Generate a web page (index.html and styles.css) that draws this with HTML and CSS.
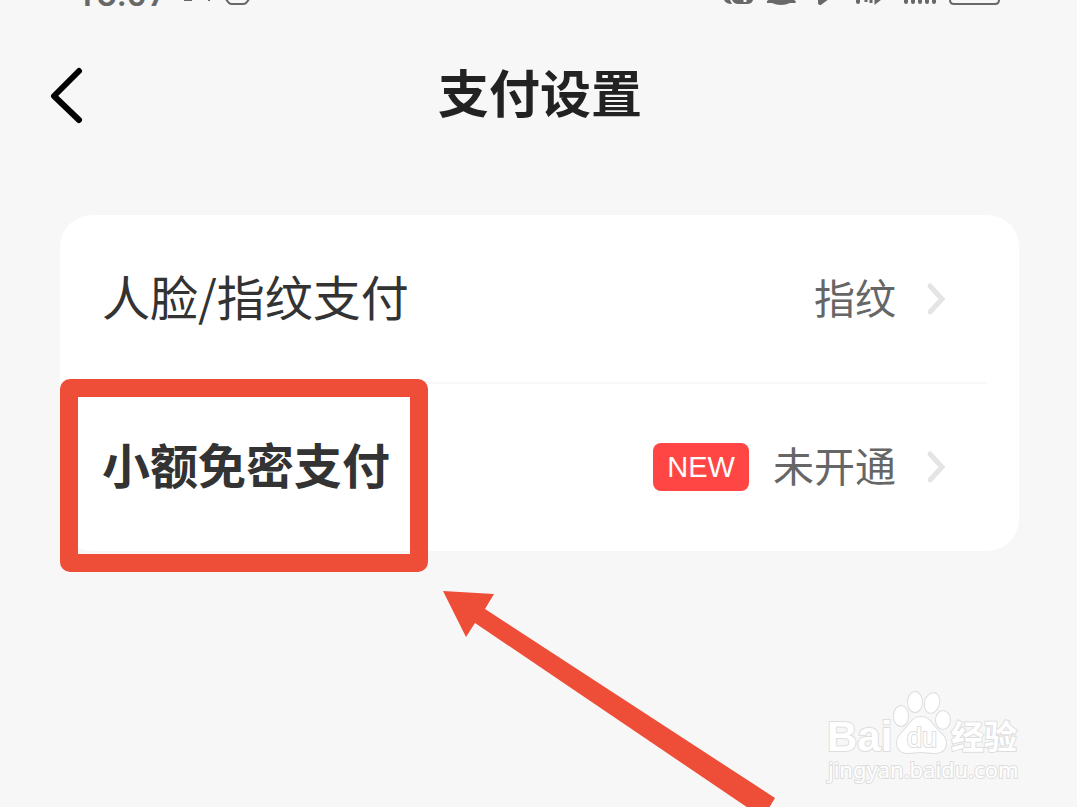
FILE: index.html
```
<!DOCTYPE html>
<html lang="zh-CN">
<head>
    <meta charset="UTF-8">
    <meta name="viewport" content="width=device-width, initial-scale=1.0">
    <title>支付设置</title>
    <link rel="stylesheet" href="styles.css">
</head>
<body>
    <div class="status-bar">
        <div class="status-left">
            <span class="time">18:07</span>
            <svg width="84" height="16" viewBox="0 0 84 16">
                <path d="M9 0h8M34 0v1" stroke="#686868" stroke-width="2"/>
                <path d="M50 -2l4 5q1 1 3 1h11q2 0 3-1l4-5" fill="none" stroke="#686868" stroke-width="2"/>
            </svg>
        </div>
        <svg width="280" height="16" viewBox="0 0 280 16">
            <g fill="#686868">
                <path d="M3 0h6l2 4q-6 0-8-4zM11 0h21q-1 4-6 4H17q-4 0-6-4z"/>
                <path d="M46 1q2-2 6-1h17q5-1 6 2l-1 1h-5q-4 2-9 2t-9-2h-5z"/>
            </g>
            <path d="M24 0v2" stroke="#f7f7f7" stroke-width="3"/>
            <g fill="none" stroke="#686868" stroke-width="4" stroke-linecap="round" stroke-linejoin="round">
                <path d="M99 -2v5l7-5"/>
                <path d="M137 -2v4"/>
                <path d="M185 -2v4M192 -2v4M199 -2v4M206 -2v4M213 -2v4"/>
            </g>
            <path d="M145 -2v4M150 -2v5M155 -2v4l5-4" fill="none" stroke="#686868" stroke-width="3"/>
            <path d="M229 -3v3q0 4 4 4h41q4 0 4-4v-3" fill="none" stroke="#686868" stroke-width="2"/>
        </svg>
    </div>

    <header class="header">
        <button type="button" class="back" aria-label="返回">
            <svg width="36" height="60" viewBox="0 0 36 60">
                <path d="M30 5L5 30l25 24" fill="none" stroke="#000" stroke-width="6" stroke-linecap="round" stroke-linejoin="round"/>
            </svg>
        </button>
        <h1>支付设置</h1>
    </header>

    <main class="card">
        <a class="row" href="#">
            <span class="label">人脸/指纹支付</span>
            <span class="value">指纹</span>
            <svg class="chevron" width="20" height="34" viewBox="0 0 20 34">
                <path d="M4 4l12 13L4 30" />
            </svg>
        </a>
        <hr class="divider">
        <a class="row" href="#">
            <span class="label strong">小额免密支付</span>
            <span class="badge">NEW</span>
            <span class="value">未开通</span>
            <svg class="chevron" width="20" height="34" viewBox="0 0 20 34">
                <path d="M4 4l12 13L4 30" />
            </svg>
        </a>

        <!-- red box and arrow lie over the second row -->
        <div class="mark"></div>
        <svg class="arrow" width="334" height="230" viewBox="0 0 334 230">
            <path d="M0 0L51 3l-9 15L332 207l-12 20L32 32l-9 14z" fill="#ee4e38"/>
        </svg>
    </main>

    <svg class="watermark" width="200" height="100" viewBox="0 0 200 100">
        <g class="wm-text">
            <text class="wm-bai" x="6" y="62">Bai</text>
            <g>
                <ellipse cx="80" cy="27" rx="7" ry="10"/>
                <ellipse cx="94" cy="13" rx="7" ry="10"/>
                <ellipse cx="111" cy="14" rx="7" ry="10" transform="rotate(14 111 14)"/>
                <ellipse cx="122" cy="31" rx="7" ry="9"/>
                <path d="M100 28c7 0 10 5 14 10 5 6 11 9 11 16 0 8-6 10-12 10-5 0-8-1-13-1s-8 1-13 1c-7 0-11-4-11-10 0-7 5-10 10-16 4-5 7-10 14-10z"/>
            </g>
            <text class="wm-du" x="86" y="58">du</text>
            <text class="wm-cn" x="130" y="60">经验</text>
            <text class="wm-url" x="7" y="89">jingyan.baidu.com</text>
        </g>
    </svg>
</body>
</html>
```
FILE: styles.css
```
* {
    box-sizing: border-box;
}

body {
    margin: 0;
    min-height: 100vh;
    position: relative;
    overflow: hidden;
    background-color: #f7f7f7;
    font-family: "Noto Sans CJK SC", sans-serif;
    color: #333;
}

.status-bar {
    display: flex;
    justify-content: space-between;
    height: 16px;
    padding: 0 76px;
    overflow: hidden;
}

.status-left {
    display: flex;
    align-items: flex-end;
    gap: 8px;
}

.time {
    padding-bottom: 4px;
    font-family: Roboto, sans-serif;
    font-size: 36px;
    font-weight: 500;
    line-height: 36px;
    color: #686868;
}

.header {
    display: grid;
    grid-template-columns: 80px 1fr 80px;
    align-items: center;
    height: 159px;
    padding: 0 46px 0 49px;
}

.back {
    display: flex;
    padding: 0;
    border: 0;
    background: none;
    cursor: pointer;
}

h1 {
    margin: 0;
    padding-bottom: 10px;
    text-align: center;
    font-size: 51px;
    line-height: 60px;
    color: #222;
}

.card {
    position: relative;
    margin: 40px 58px 0 60px;
    border-radius: 32px;
    background-color: #fff;
}

.row {
    display: flex;
    align-items: center;
    height: 168px;
    padding: 0 73px 0 42px;
    color: inherit;
    text-decoration: none;
}

.label {
    flex: 1;
    padding-bottom: 8px;
    font-size: 48px;
    line-height: 60px;
}

.strong {
    font-weight: bold;
}

.badge {
    padding: 0 14px;
    margin-right: 24px;
    border-radius: 8px;
    background-color: #ff4645;
    color: #fff;
    font-family: "Liberation Sans", sans-serif;
    font-size: 29px;
    line-height: 48px;
}

.value {
    padding-bottom: 6px;
    margin-right: 30px;
    font-size: 41px;
    line-height: 60px;
    color: #666;
}

.chevron path {
    fill: none;
    stroke: #e4e4e4;
    stroke-width: 5;
    stroke-linecap: round;
}

.divider {
    height: 2px;
    margin: -1px 32px -1px 42px;
    border: 0;
    background-color: #f7f7f7;
}

.mark {
    position: absolute;
    top: 164px;
    left: 0;
    width: 368px;
    height: 193px;
    border: 18px solid #ee4e38;
    border-radius: 10px;
}

.arrow {
    position: absolute;
    top: 376px;
    left: 383px;
}

.watermark {
    position: absolute;
    right: 56px;
    bottom: 18px;
    overflow: visible;
}

.wm-text {
    fill: #fff;
    stroke: #dedede;
    stroke-width: 2px;
    paint-order: stroke;
}

.wm-bai {
    font: bold 42px "Liberation Sans", sans-serif;
}

.wm-du {
    font: 27px "Liberation Sans", sans-serif;
}

.wm-cn {
    font: bold 33px "Liberation Sans", "Noto Sans CJK SC", sans-serif;
}

.wm-url {
    font: 22px "Noto Sans", sans-serif;
}
```
